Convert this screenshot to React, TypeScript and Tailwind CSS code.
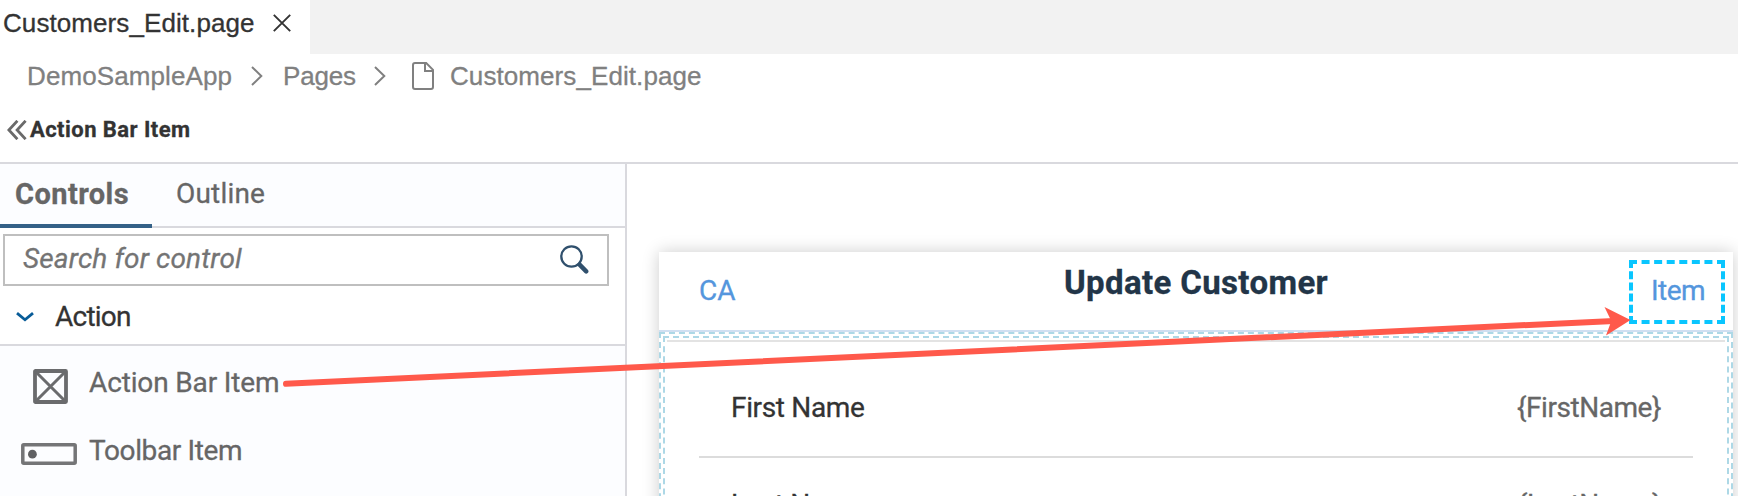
function CloseIcon() {
  return (
    <svg width="18" height="18" viewBox="0 0 18 18" fill="none" stroke="#333" strokeWidth="1.9">
      <path d="M0.8 0.8 17.2 17.2M17.2 0.8 0.8 17.2" />
    </svg>
  );
}

function Separator() {
  return (
    <svg width="12" height="20" viewBox="0 0 12 20" fill="none" stroke="#808080" strokeWidth="2">
      <path d="M1 1 10.3 10 1 19" />
    </svg>
  );
}

function FileIcon() {
  return (
    <svg width="22" height="28" viewBox="0 0 22 28" fill="none" stroke="#808080" strokeWidth="2">
      <path d="M3 1H14.2L21 7.8V25a2 2 0 0 1-2 2H3a2 2 0 0 1-2-2V3a2 2 0 0 1 2-2Z" />
      <path d="M13 1V9H21" />
    </svg>
  );
}

function CollapseIcon() {
  return (
    <svg width="20" height="20" viewBox="0 0 20 20" fill="none" stroke="#6a6a6a" strokeWidth="2.8">
      <path d="M10.4 0.8 1.9 10 10.4 19.2M18.6 0.8 10.1 10 18.6 19.2" />
    </svg>
  );
}

function SearchIcon() {
  return (
    <svg width="29" height="29" viewBox="0 0 29 29" fill="none" stroke="#30506d">
      <circle cx="11.5" cy="11.5" r="10.2" strokeWidth="2.3" />
      <path d="M19.6 19.6 26.2 26.4" strokeWidth="4.4" strokeLinecap="round" />
    </svg>
  );
}

function ActionBarItemIcon() {
  return (
    <svg width="35" height="35" viewBox="0 0 35 35" fill="none" stroke="#6a6b6d">
      <rect x="2" y="2" width="31" height="31" rx="0.5" strokeWidth="3.8" />
      <path d="M3 3 32 32M32 3 3 32" strokeWidth="3" />
    </svg>
  );
}

function ToolbarItemIcon() {
  return (
    <svg width="56" height="22" viewBox="0 0 56 22" fill="none" stroke="#747577">
      <rect x="1.8" y="1.8" width="52.4" height="18.4" rx="1" strokeWidth="3.5" />
      <circle cx="11.4" cy="11.2" r="4.4" fill="#606163" stroke="none" />
    </svg>
  );
}

function DragArrow() {
  return (
    <svg className="pointer-events-none absolute left-0 top-0" width="1738" height="496" viewBox="0 0 1738 496">
      <path d="M286 383.8 1614 320.9" stroke="#ff594b" strokeWidth="6" strokeLinecap="round" />
      <path d="M1630.5 320 1604.5 307 1611.3 321 1606 335.5Z" fill="#ff594b" />
    </svg>
  );
}

export default function App() {
  return (
    <div className="relative flex h-[496px] w-[1738px] flex-col overflow-hidden bg-white font-[Roboto,sans-serif] text-[28px] leading-8 text-[#666] [-webkit-text-stroke:0.3px]">
      <header className="flex h-[54px] shrink-0 bg-[#f2f2f2] font-['Liberation_Sans',sans-serif] text-[26px] leading-[30px] text-[#333]">
        <div className="flex w-[310px] items-center gap-[19px] bg-white pb-2 pl-[3px]">
          <span className="w-[251px] shrink-0 tracking-[0.08px]">Customers_Edit.page</span>
          <CloseIcon />
        </div>
      </header>

      <nav className="flex h-11 shrink-0 items-center pl-[27px] font-['Liberation_Sans',sans-serif] text-[26px] leading-[30px] text-[#808080]">
        <span className="w-[224px] tracking-[0.1px]">DemoSampleApp</span>
        <Separator />
        <span className="ml-5 w-[91px] tracking-[-0.18px]">Pages</span>
        <Separator />
        <span className="ml-[26px]">
          <FileIcon />
        </span>
        <span className="ml-4 tracking-[0.08px]">Customers_Edit.page</span>
      </nav>

      <div className="flex h-[66px] shrink-0 items-center border-b-2 border-[#d9d9de] pl-[7px] text-[22px] leading-[26px] text-[#333]">
        <CollapseIcon />
        <h1 className="ml-[3px] font-bold tracking-[0.44px]">Action Bar Item</h1>
      </div>

      <main className="flex min-h-0 flex-1">
        <aside className="flex w-[627px] shrink-0 flex-col border-r-2 border-[#d9d9de] bg-white">
          <div className="flex h-16 shrink-0 border-b-2 border-[#d9d9de] bg-[#fcfdff]">
            <div className="-mb-0.5 w-[152px] border-b-4 border-[#346187] pl-[15px] pt-3.5 text-[29px] font-bold tracking-[0.43px]">
              Controls
            </div>
            <div className="pl-6 pt-3.5 tracking-[0.18px]">Outline</div>
          </div>

          <div className="ml-[3px] mt-1.5 flex h-[52px] w-[606px] shrink-0 items-center justify-between border-2 border-[#bfbfbf] pb-0.5 pl-[18px] pr-[18px] italic text-[#747474]">
            <span className="tracking-[0.16px]">Search for control</span>
            <SearchIcon />
          </div>

          <div className="flex h-[60px] shrink-0 items-center border-b-2 border-[#d9d9de] pl-4 pt-1 text-[#333]">
            <svg width="18" height="10" viewBox="0 0 18 10" fill="none" stroke="#085c98" strokeWidth="2.8">
              <path d="M1 1.2 9 7.8 17 1.2" />
            </svg>
            <span className="ml-[21px] tracking-[-0.77px]">Action</span>
          </div>

          <ul className="flex-1 bg-[#fcfdff]">
            <li className="flex h-[68px] pl-[21px] pt-[21px]">
              <span className="flex w-[68px] pl-3 pt-0.5">
                <ActionBarItemIcon />
              </span>
              <span className="tracking-[-0.14px]">Action Bar Item</span>
            </li>
            <li className="flex h-[68px] pl-[21px] pt-[21px]">
              <span className="flex w-[68px] pt-2">
                <ToolbarItemIcon />
              </span>
              <span className="tracking-[-0.37px]">Toolbar Item</span>
            </li>
          </ul>
        </aside>

        <section className="flex-1 pl-8 pt-[88px]">
          <div className="h-[300px] w-[1074px] bg-white shadow-[0_0_16px_rgba(0,0,0,0.2)]">
            <div className="flex h-20 border-b-2 border-[#d0dff1] pl-10 pr-2 pt-2 text-[#5496dd]">
              <span className="mt-[15px] w-[365px]">CA</span>
              <h2 className="mt-[5px] text-[33px] font-bold leading-9 tracking-[0.36px] text-[#223548]">
                Update Customer
              </h2>
              <div className="ml-auto h-16 w-24 border-4 border-dashed border-[#09c6ff] pl-[18px] pt-[11px] tracking-[-0.5px]">
                Item
              </div>
            </div>
            <div className="border-2 border-dashed border-[#add8e6] p-0.5">
              <div className="h-[260px] border-2 border-dashed border-[#add8e6] p-0.5">
                <div className="border-t-2 border-[#e3e3e3] px-8">
                  <div className="flex h-[116px] justify-between border-b-2 border-[#dcdcdc] px-8 pt-[50px]">
                    <span className="tracking-[-0.34px] text-[#333]">First Name</span>
                    <span className="tracking-[-0.45px]">{"{FirstName}"}</span>
                  </div>
                  <div className="flex justify-between px-8 pt-[31px]">
                    <span className="tracking-[-0.34px] text-[#333]">Last Name</span>
                    <span className="tracking-[-0.45px]">{"{LastName}"}</span>
                  </div>
                </div>
              </div>
            </div>
          </div>
        </section>
      </main>

      <DragArrow />
    </div>
  );
}
